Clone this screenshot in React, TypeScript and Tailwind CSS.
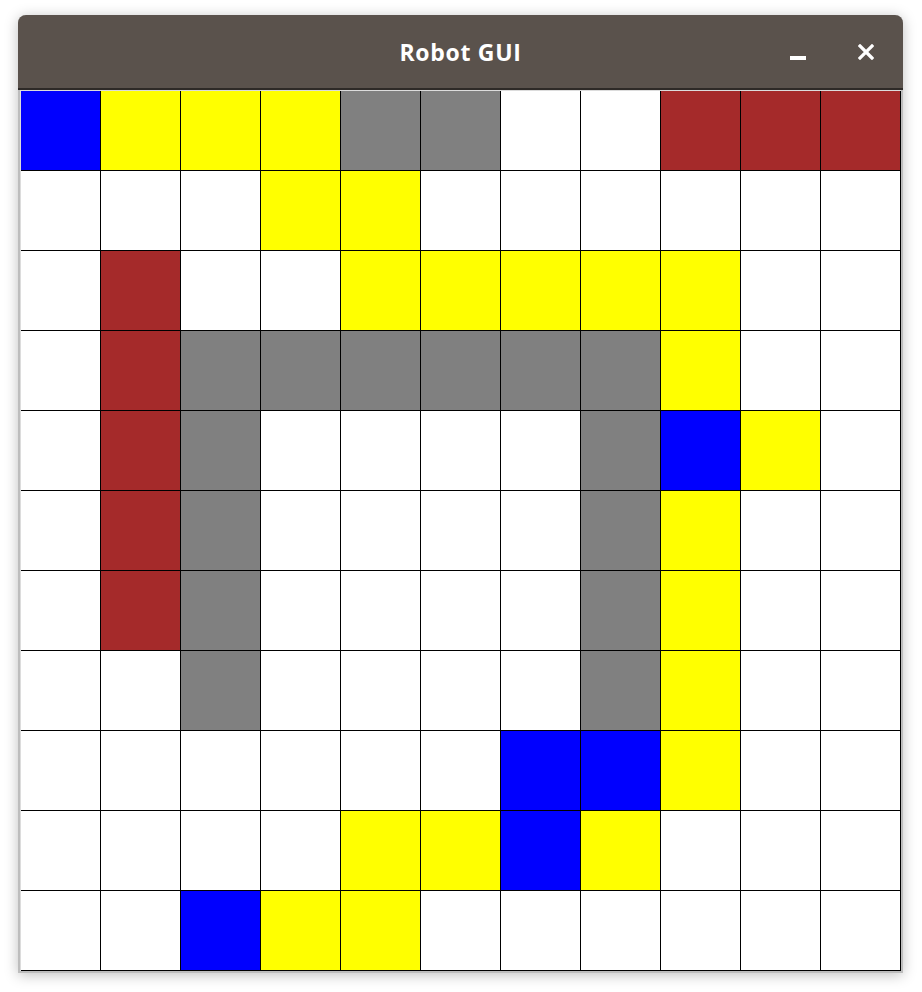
const B = "bg-[#0000ff]";
const Y = "bg-[#ffff00]";
const G = "bg-[#808080]";
const R = "bg-[#a52a2a]";
const W = "bg-white";

const rows: string[][] = [
  [B, Y, Y, Y, G, G, W, W, R, R, R],
  [W, W, W, Y, Y, W, W, W, W, W, W],
  [W, R, W, W, Y, Y, Y, Y, Y, W, W],
  [W, R, G, G, G, G, G, G, Y, W, W],
  [W, R, G, W, W, W, W, G, B, Y, W],
  [W, R, G, W, W, W, W, G, Y, W, W],
  [W, R, G, W, W, W, W, G, Y, W, W],
  [W, W, G, W, W, W, W, G, Y, W, W],
  [W, W, W, W, W, W, B, B, Y, W, W],
  [W, W, W, W, Y, Y, B, Y, W, W, W],
  [W, W, B, Y, Y, W, W, W, W, W, W],
];

function TitleBar() {
  return (
    <div className="relative flex items-center justify-center h-[75px] pt-[2px] bg-[#5a524c] rounded-t-[8px] border-b-2 border-[#2e2a27]">
      <span
        className="text-white font-bold text-[23px] tracking-[0.7px]"
        style={{ fontFamily: "'Open Sans', 'Noto Sans', sans-serif" }}
      >
        Robot GUI
      </span>
      <div className="absolute left-[772px] top-[41px] w-[16px] h-[4px] bg-white" />
      <svg
        className="absolute left-[840px] top-[29px]"
        width="16"
        height="16"
        viewBox="0 0 16 16"
      >
        <path
          d="M2 2 L14 14 M14 2 L2 14"
          stroke="white"
          strokeWidth="3.2"
          strokeLinecap="square"
        />
      </svg>
    </div>
  );
}

function Board() {
  return (
    <div className="grid grid-cols-[repeat(11,80px)] border-l border-t border-[#dcdcdc] w-fit">
      {rows.flatMap((row, r) =>
        row.map((c, i) => (
          <div
            key={`${r}-${i}`}
            className={`h-[80px] border-r border-b border-black ${c}`}
          />
        ))
      )}
    </div>
  );
}

export default function App() {
  return (
    <div className="w-[922px] h-[992px] bg-white pt-[15px] pl-[18px]">
      <div className="w-[885px] rounded-t-[8px] border-x-2 border-b-2 border-[#bdbdbd] bg-[#e8e8e8] shadow-[0_2px_14px_rgba(0,0,0,0.25)]">
        <div className="-mx-[2px]">
          <TitleBar />
        </div>
        <Board />
      </div>
    </div>
  );
}
